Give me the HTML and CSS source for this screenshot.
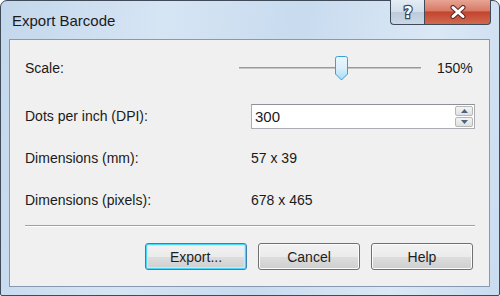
FILE: index.html
```html
<!DOCTYPE html>
<html lang="en">
<head>
    <meta charset="UTF-8">
    <title>Export Barcode</title>
    <link rel="stylesheet" href="styles.css">
</head>
<body>
    <div class="window">
        <div class="titlebar">
            <span class="title">Export Barcode</span>
            <div class="caption-buttons">
                <div class="cap-btn help-btn">
                    <svg width="16" height="18" viewBox="0 0 16 18">
                        <text x="8" y="15" text-anchor="middle" class="help-glyph">?</text>
                    </svg>
                </div>
                <div class="cap-btn close-btn">
                    <svg width="18" height="14" viewBox="0 0 18 14">
                        <path d="M4 2.5 L14 11.5 M14 2.5 L4 11.5" stroke="#5a2a24" stroke-width="5" stroke-linecap="round"/>
                        <path d="M4 2.5 L14 11.5 M14 2.5 L4 11.5" stroke="#ffffff" stroke-width="3" stroke-linecap="round"/>
                    </svg>
                </div>
            </div>
        </div>

        <div class="client">
            <div class="row row-scale">
                <div class="label">Scale:</div>
                <div class="slider">
                    <div class="track"></div>
                    <svg class="thumb" width="15" height="25" viewBox="0 0 15 25">
                        <defs>
                            <linearGradient id="tg" x1="0" y1="0" x2="0" y2="1">
                                <stop offset="0" stop-color="#eaf6fd"/>
                                <stop offset="0.5" stop-color="#d9f0fc"/>
                                <stop offset="1" stop-color="#a7d9f5"/>
                            </linearGradient>
                        </defs>
                        <path d="M1.5 2.5 Q1.5 0.5 3.5 0.5 L11.5 0.5 Q13.5 0.5 13.5 2.5 L13.5 18 L7.5 24 L1.5 18 Z" fill="url(#tg)" stroke="#3c9fd8" stroke-width="1"/>
                    </svg>
                </div>
                <div class="percent">150%</div>
            </div>

            <div class="row row-dpi">
                <div class="label">Dots per inch (DPI):</div>
                <div class="spinbox">
                    <span class="spin-value">300</span>
                    <div class="spin-buttons">
                        <div class="spin-btn"><svg width="7" height="4" viewBox="0 0 7 4"><path d="M0 4 L3.5 0 L7 4 Z" fill="#4d6185"/></svg></div>
                        <div class="spin-btn"><svg width="7" height="4" viewBox="0 0 7 4"><path d="M0 0 L3.5 4 L7 0 Z" fill="#4d6185"/></svg></div>
                    </div>
                </div>
            </div>

            <div class="row row-info">
                <div class="label">Dimensions (mm):</div>
                <div class="value">57 x 39</div>
            </div>

            <div class="row row-info">
                <div class="label">Dimensions (pixels):</div>
                <div class="value">678 x 465</div>
            </div>

            <div class="separator"></div>

            <div class="buttons">
                <button class="btn btn-default">Export...</button>
                <button class="btn">Cancel</button>
                <button class="btn">Help</button>
            </div>
        </div>
    </div>
</body>
</html>
```

FILE: styles.css
```css
body { margin: 0; background: #ffffff; font-family: "Liberation Sans", Arial, sans-serif; font-size: 14px; color: #1a1a1a; }
.window { width: 500px; height: 296px; box-sizing: border-box; border: 1px solid #3f4b58; border-radius: 7px 7px 2px 2px; background: linear-gradient(100deg, #c3d7ec 0%, #d6e5f4 30%, #c8dbef 55%, #dbe8f5 80%, #c9dcf0 100%); display: flex; flex-direction: column; }
.titlebar { height: 38px; display: flex; justify-content: space-between; align-items: flex-start; }
.title { font-size: 15px; margin: 11px 0 0 11px; color: #1b1b1b; }
.caption-buttons { display: flex; margin-right: 8px; margin-top: -1px; }
.cap-btn { height: 25px; box-sizing: border-box; border: 1px solid #3e4a5a; border-top: none; display: flex; align-items: center; justify-content: center; }
.help-btn { width: 34px; border-radius: 0 0 0 4px; border-right: none; background: linear-gradient(#e4ecf5 0%, #d3dee9 50%, #bccadb 51%, #cad8e7 100%); }
.help-glyph { font-family: "DejaVu Sans", sans-serif; font-weight: bold; font-size: 15px; fill: #ffffff; stroke: #3a4a5e; stroke-width: 2.5px; paint-order: stroke; }
.close-btn { width: 67px; border-radius: 0 0 4px 0; background: linear-gradient(#e8a493 0%, #d77a66 45%, #c2432e 50%, #d16a4f 100%); }
.client { margin: 0 9px 0 8px; height: 248px; box-sizing: border-box; border: 1px solid #8599b0; background: #f0f0f0; padding: 13px 14px 0 15px; display: flex; flex-direction: column; }
.row { display: flex; align-items: center; height: 30px; }
.label { width: 214px; flex-shrink: 0; }
.row-dpi { margin-top: 18px; }
.row-info { margin-top: 12px; }
.slider { position: relative; width: 182px; height: 30px; display: flex; align-items: center; }
.track { width: 100%; height: 2px; background: #c6c6c6; border-top: 1px solid #9a9a9a; box-sizing: border-box; }
.thumb { position: absolute; left: 95px; top: 3px; }
.percent { margin-left: 16px; }
.spinbox { margin-left: 12px; width: 225px; height: 25px; box-sizing: border-box; border: 1px solid #abadb3; border-top-color: #8e9197; background: #ffffff; display: flex; align-items: center; justify-content: space-between; }
.spin-value { padding-left: 3px; font-size: 15px; }
.spin-buttons { display: flex; flex-direction: column; gap: 1px; margin-right: 1px; }
.spin-btn { width: 18px; height: 10px; box-sizing: border-box; border: 1px solid #b7b7b7; border-radius: 2px; background: linear-gradient(#f4f4f4, #e0e0e0); display: flex; align-items: center; justify-content: center; }
.value { margin-left: 12px; }
.separator { margin-top: 10px; height: 1px; background: #a0a0a0; border-bottom: 1px solid #ffffff; }
.buttons { margin-top: 16px; display: flex; justify-content: flex-end; gap: 11px; padding-right: 2px; }
.btn { width: 102px; height: 27px; font-family: inherit; font-size: 14px; color: #1e1e1e; border: 1px solid #707070; border-radius: 3px; background: linear-gradient(#f2f2f2 0%, #ebebeb 50%, #dddddd 51%, #cfcfcf 100%); box-shadow: inset 0 0 0 1px #fcfcfc; }
.btn-default { border-color: #3c7fb1; box-shadow: inset 0 0 0 1px #48d7f9, inset 0 0 0 2px #c0ecfb; }
```
